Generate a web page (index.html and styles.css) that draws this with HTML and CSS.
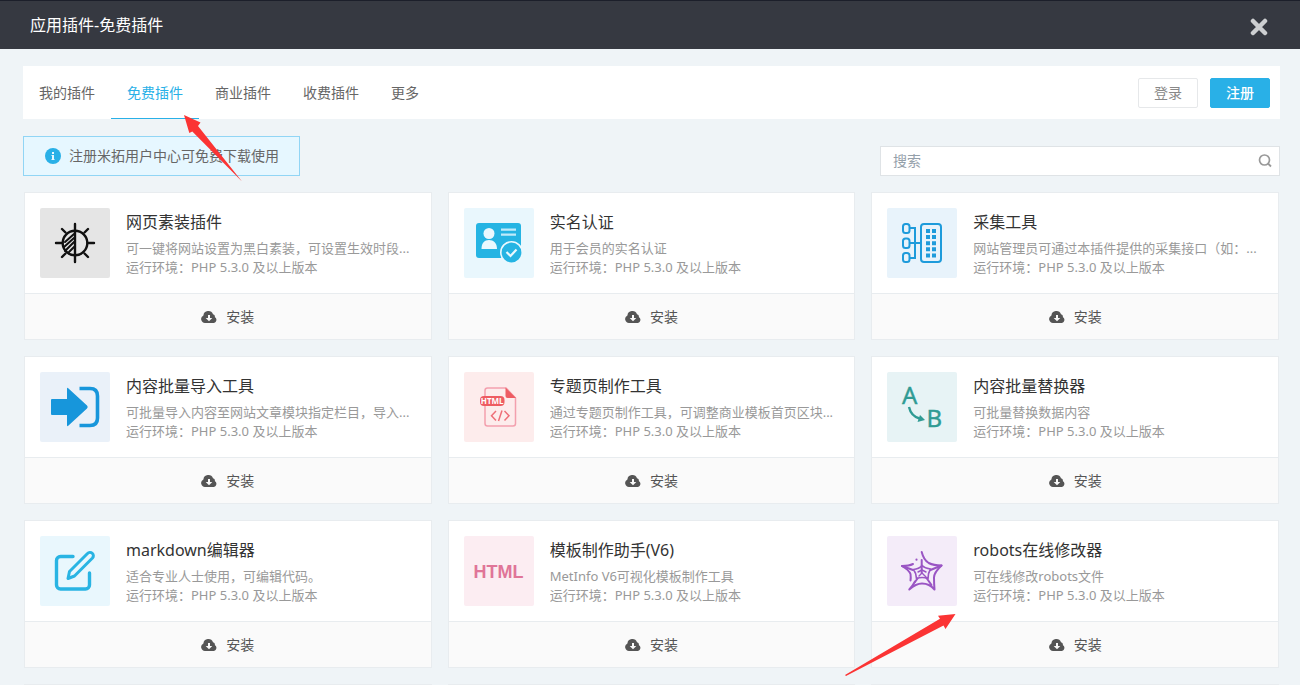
FILE: index.html
```html
<!DOCTYPE html>
<html lang="zh-CN">
<head>
<meta charset="utf-8">
<title>应用插件-免费插件</title>
<link rel="stylesheet" href="styles.css">
</head>
<body>
<svg class="symbols" aria-hidden="true">
  <symbol id="cloud" viewBox="0 0 16 12"><path fill="currentColor" fill-rule="evenodd" d="M4 12a4 4 0 0 1-1.600-7.600A5 5 0 0 1 12 3.200a2.400 2.400 0 0 1 1.800 2.900A3.200 3.200 0 0 1 13 12zM7 4v3H4.700L8 10.300 11.300 7H9V4z"/></symbol>
</svg>
<header class="topbar">
  <h1 class="topbar-title">应用插件-免费插件</h1>
  <button class="close" type="button" aria-label="关闭"><svg viewBox="0 0 18 18" width="18" height="18"><path d="M3 3l12 12M15 3L3 15" fill="none" stroke="currentColor" stroke-width="4.500" stroke-linecap="round"/></svg></button>
</header>
<main class="page">
  <div class="toolbar">
    <nav class="tabs">
      <a class="tab" href="#mine">我的插件</a>
      <a class="tab active" href="#free">免费插件</a>
      <a class="tab" href="#business">商业插件</a>
      <a class="tab" href="#paid">收费插件</a>
      <a class="tab" href="#more">更多</a>
    </nav>
    <div class="account">
      <button class="btn" type="button">登录</button>
      <button class="btn primary" type="button">注册</button>
    </div>
  </div>
  <div class="subbar">
    <div class="notice">
      <svg viewBox="0 0 16 16" width="16" height="16"><circle cx="8" cy="8" r="8" fill="#29b0e7"/><path d="M7 4h2v2H7zM6.500 7H9v4h.5v1h-3v-1H7V8h-.5z" fill="#e6f7ff"/></svg>
      <span>注册米拓用户中心可免费下载使用</span>
    </div>
    <form class="search">
      <input type="search" placeholder="搜索" aria-label="搜索">
      <button type="button" aria-label="搜索"><svg viewBox="0 0 14 14" width="14" height="14"><circle cx="6.500" cy="6" r="5" fill="none" stroke="currentColor" stroke-width="1.700"/><path d="M10 9.500l3 3" stroke="currentColor" stroke-width="1.800"/></svg></button>
    </form>
  </div>
  <div class="grid">
    <article class="card">
      <div class="info">
        <svg class="tile gray" viewBox="0 0 70 70"><g fill="none" stroke="#111" stroke-width="2.400" stroke-linecap="round"><circle cx="35" cy="35" r="12.300"/><path d="M35 16v38M16 35h6M48 35h6M22 21l3.500 3.500M48 21l-3.500 3.500M22 49l3.500-3.500M48 49l-3.500-3.500"/><path d="M25 34l9-8M24 39l10-9M25 43l9-9M29 44l5-5" stroke-width="2"/></g></svg>
        <div class="text"><h2>网页素装插件</h2><p>可一键将网站设置为黑白素装，可设置生效时段...</p><p>运行环境：PHP 5.3.0 及以上版本</p></div>
      </div>
      <button class="install" type="button"><svg><use href="#cloud"/></svg>安装</button>
    </article>
    <article class="card">
      <div class="info">
        <svg class="tile cyan" viewBox="0 0 70 70"><rect x="12" y="15" width="45" height="35" rx="3" fill="#25b4e3"/><g fill="#e9f8fe"><circle cx="25" cy="25.500" r="5.500"/><path d="M17.500 41c0-6 3-9 7.500-9s8 3 8 9z"/></g><path d="M37 21.700h15M37 26.700h15" stroke="#bfeafa" stroke-width="2.200"/><circle cx="47.500" cy="44.500" r="10.700" fill="#25b4e3" stroke="#e9f8fe" stroke-width="1.600"/><path d="M42.500 44l4 4 6-6.500" fill="none" stroke="#e9f8fe" stroke-width="2.200"/></svg>
        <div class="text"><h2>实名认证</h2><p>用于会员的实名认证</p><p>运行环境：PHP 5.3.0 及以上版本</p></div>
      </div>
      <button class="install" type="button"><svg><use href="#cloud"/></svg>安装</button>
    </article>
    <article class="card">
      <div class="info">
        <svg class="tile sky" viewBox="0 0 70 70"><g fill="none" stroke="#1e9bdb" stroke-width="2"><rect x="34" y="16" width="20" height="38" rx="3"/><rect x="16" y="16" width="6.500" height="9" rx="2.500"/><rect x="16" y="30.500" width="6.500" height="9.500" rx="2.500"/><rect x="16" y="45" width="6.500" height="9" rx="2.500"/><path d="M22.500 20H28v30h-5.500M22.500 35H34"/></g><path d="M41 21v28.500M47 21v28.500" stroke="#1e9bdb" stroke-width="4" stroke-dasharray="4 2.100"/></svg>
        <div class="text"><h2>采集工具</h2><p>网站管理员可通过本插件提供的采集接口（如：...</p><p>运行环境：PHP 5.3.0 及以上版本</p></div>
      </div>
      <button class="install" type="button"><svg><use href="#cloud"/></svg>安装</button>
    </article>
    <article class="card">
      <div class="info">
        <svg class="tile blue" viewBox="0 0 70 70"><path d="M12 27h15V17q0-2 1.500-.6L47 33.500q1.500 1.500 0 3L28.500 53.500Q27 55 27 53V43H12q-1 0-1-1V28q0-1 1-1z" fill="#1796db"/><path d="M39.500 16.500H50q7.500 0 7.500 7.500v22q0 7.500-7.500 7.500H39.500" fill="none" stroke="#1796db" stroke-width="3.600"/></svg>
        <div class="text"><h2>内容批量导入工具</h2><p>可批量导入内容至网站文章模块指定栏目，导入...</p><p>运行环境：PHP 5.3.0 及以上版本</p></div>
      </div>
      <button class="install" type="button"><svg><use href="#cloud"/></svg>安装</button>
    </article>
    <article class="card">
      <div class="info">
        <svg class="tile rose" viewBox="0 0 70 70"><path d="M42 16H23.500a2.500 2.500 0 0 0-2.500 2.500v33a2.500 2.500 0 0 0 2.500 2.500h25.500a2.500 2.500 0 0 0 2.500-2.500V26z" fill="none" stroke="#f3a0ae" stroke-width="1.500"/><path d="M41.500 15.500v8.500q0 2 2 2H52z" fill="#ee5c62"/><rect x="16" y="24" width="24.500" height="10" rx="4" fill="#ee5c62"/><text x="28.200" y="32" text-anchor="middle" font-size="8" font-weight="700" fill="#fff">HTML</text><path d="M32 39l-4.500 4.700L32 48.500M40.500 39l4.500 4.700-4.500 4.800M38 38.500l-3.500 10.500" fill="none" stroke="#ee6f78" stroke-width="1.500"/></svg>
        <div class="text"><h2>专题页制作工具</h2><p>通过专题页制作工具，可调整商业模板首页区块...</p><p>运行环境：PHP 5.3.0 及以上版本</p></div>
      </div>
      <button class="install" type="button"><svg><use href="#cloud"/></svg>安装</button>
    </article>
    <article class="card">
      <div class="info">
        <svg class="tile teal" viewBox="0 0 70 70"><g fill="#309b94" stroke="#309b94" stroke-width=".4" font-size="24"><text x="15" y="32">A</text><text x="39.500" y="55">B</text></g><path d="M22 35q2 9 10.500 11.500" fill="none" stroke="#309b94" stroke-width="2.400"/><path d="M33 43l5 5-7.500 2z" fill="#309b94"/></svg>
        <div class="text"><h2>内容批量替换器</h2><p>可批量替换数据内容</p><p>运行环境：PHP 5.3.0 及以上版本</p></div>
      </div>
      <button class="install" type="button"><svg><use href="#cloud"/></svg>安装</button>
    </article>
    <article class="card">
      <div class="info">
        <svg class="tile cyan" viewBox="0 0 70 70"><g fill="none" stroke="#29b4e3" stroke-width="3.400" stroke-linecap="round" stroke-linejoin="round"><path d="M33 20.500H20.500a4 4 0 0 0-4 4V49a4 4 0 0 0 4 4h25a4 4 0 0 0 4-4V37"/><path d="M28 42.500l1.500-7L47.500 17.500a3 3 0 0 1 5 4.500L34.500 40z" stroke-width="3"/></g></svg>
        <div class="text"><h2>markdown编辑器</h2><p>适合专业人士使用，可编辑代码。</p><p>运行环境：PHP 5.3.0 及以上版本</p></div>
      </div>
      <button class="install" type="button"><svg><use href="#cloud"/></svg>安装</button>
    </article>
    <article class="card">
      <div class="info">
        <svg class="tile pink" viewBox="0 0 70 70"><text class="arial" x="34.500" y="41.500" text-anchor="middle" font-size="18" font-weight="700" fill="#e07598">HTML</text></svg>
        <div class="text"><h2>模板制作助手(V6)</h2><p>MetInfo V6可视化模板制作工具</p><p>运行环境：PHP 5.3.0 及以上版本</p></div>
      </div>
      <button class="install" type="button"><svg><use href="#cloud"/></svg>安装</button>
    </article>
    <article class="card">
      <div class="info">
        <svg class="tile violet" viewBox="0 0 70 70"><g fill="none" stroke="#9a55c4" stroke-width="2" stroke-linecap="round" stroke-linejoin="round"><path d="M34.700 16q2 8 7 11 5 2.500 12.800 2.500-7.500 7-7.500 12 0 6 .5 12-5-6-12.500-6-6 0-12.700 6 4-4.500 5.700-8M26 28q-4 2-11 2 7 4 8.500 8 .5 4 0 6.500"/><path d="M34.700 24v13M15 30l11 4M54.500 29.500l-11 4.500M28 46l2.500-3.500M44.500 49l-5-7"/><path d="M35 29.500q3 3 8.500 3.500-2.500 4-2.500 9.500-6-2-11.500 0 0-5-3-9 5.500-.5 8.500-4z" stroke-width="1.700"/><path d="M31 36l4-2 4 2M32 40l3-3 4 4" stroke-width="1.400"/></g><circle cx="29.500" cy="23.700" r="1.100" fill="#9a55c4"/></svg>
        <div class="text"><h2>robots在线修改器</h2><p>可在线修改robots文件</p><p>运行环境：PHP 5.3.0 及以上版本</p></div>
      </div>
      <button class="install" type="button"><svg><use href="#cloud"/></svg>安装</button>
    </article>
    <article class="card"></article>
    <article class="card"></article>
    <article class="card"></article>
  </div>
</main>
<svg class="arrow arrow-tab" viewBox="0 0 58 67" aria-hidden="true"><path d="M0 0l16.500 7.500-2.500 3.500L58 66.500 8.300 16.500 5.300 18z"/></svg>
<svg class="arrow arrow-card" viewBox="0 0 111 62" aria-hidden="true"><path d="M110.500 0L93 1.700l2 3L0 61l1 1 97.500-50.500 2 3.500z"/></svg>
</body>
</html>
```
FILE: styles.css
```css
* { box-sizing: border-box; }

body {
  margin: 0;
  height: 100vh;
  overflow: hidden;
  position: relative;
  background: #eff4f7;
  color: #555;
  font: 14px/20px "Noto Sans", "Noto Sans CJK SC", sans-serif;
}

button, input { font: inherit; color: inherit; }
button { cursor: pointer; padding: 0; }
h1, h2, p { margin: 0; font-weight: inherit; }
.symbols { display: none; }

.topbar {
  display: flex;
  align-items: center;
  justify-content: space-between;
  height: 49px;
  padding: 0 32px 0 30px;
  background: #363941;
  border-top: 1px solid #1c1f2a;
  color: #fff;
}
.topbar-title { font-size: 16px; line-height: 24px; }
.close {
  display: flex;
  padding-top: 4px;
  border: 0;
  background: none;
  color: #cdcfd1;
}

.page { padding: 17px 20px 0 23px; }

.toolbar {
  display: flex;
  align-items: center;
  justify-content: space-between;
  height: 53px;
  padding-right: 10px;
  background: #fff;
}
.tabs { display: flex; align-self: stretch; }
.tab {
  display: flex;
  align-items: center;
  padding: 2px 16px 0;
  border-bottom: 1px solid transparent;
  color: #666;
  text-decoration: none;
}
.tab.active { color: #29b0e7; border-color: #29b0e7; }
.account { display: flex; gap: 12px; }
.btn {
  width: 60px;
  height: 30px;
  border: 1px solid #e6e8ea;
  border-radius: 2px;
  background: #fff;
  color: #888;
}
.btn.primary { background: #29b0e7; border-color: #29b0e7; color: #fff; font-weight: 500; }

.subbar {
  display: flex;
  align-items: flex-end;
  justify-content: space-between;
  margin-top: 17px;
}
.notice {
  display: flex;
  align-items: center;
  gap: 8px;
  height: 40px;
  padding: 0 20px 0 21px;
  border: 1px solid #91d5f5;
  background: #e6f7ff;
  color: #666;
}
.search {
  display: flex;
  align-items: center;
  width: 400px;
  height: 30px;
  padding: 0 7px 0 12px;
  border: 1px solid #dfe3e6;
  background: #fff;
}
.search input {
  flex: 1;
  min-width: 0;
  padding: 0;
  border: 0;
  outline: 0;
  background: none;
}
.search input::placeholder { color: #94a0aa; }
.search button { display: flex; border: 0; background: none; color: #999; }

.grid {
  display: grid;
  grid-template-columns: repeat(3, minmax(0, 1fr));
  gap: 16px;
  margin: 16px 1px 0;
}
.card {
  display: flex;
  flex-direction: column;
  min-height: 148px;
  border: 1px solid #e8ecef;
  background: #fff;
}
.info { display: flex; gap: 16px; padding: 15px; }
.tile {
  flex: none;
  width: 70px;
  height: 70px;
  border-radius: 2px;
  font-family: "Noto Sans", sans-serif;
}
.arial { font-family: "Liberation Sans", sans-serif; }
.gray { background: #e5e5e5; }
.cyan { background: #e9f7fd; }
.sky { background: #e8f3fb; }
.blue { background: #eaf1f9; }
.rose { background: #fdecec; }
.teal { background: #e7f3f5; }
.pink { background: #fcedf2; }
.violet { background: #f4ecf9; }

.text { flex: 1; min-width: 0; padding-top: 2px; }
.text h2 { margin-bottom: 5px; color: #333; font-size: 16px; line-height: 24px; }
.text p {
  overflow: hidden;
  color: #999;
  font-size: 13px;
  line-height: 19px;
  text-overflow: ellipsis;
  white-space: nowrap;
}
.install {
  display: flex;
  align-items: center;
  justify-content: center;
  gap: 9px;
  height: 46px;
  border: 0;
  border-top: 1px solid #e8ecef;
  background: #fafafa;
}
.install svg { width: 16px; height: 12px; }

.arrow { position: absolute; fill: #fb3434; }
.arrow-tab { left: 184px; top: 115px; width: 58px; height: 67px; }
.arrow-card { left: 845px; top: 614px; width: 111px; height: 62px; }
```
